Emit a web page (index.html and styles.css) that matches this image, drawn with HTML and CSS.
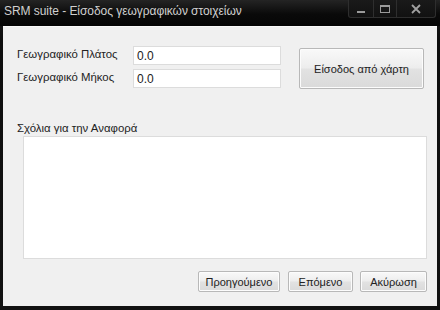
FILE: index.html
```html
<!DOCTYPE html>
<html lang="el">
<head>
<meta charset="utf-8">
<title>SRM suite</title>
<link rel="stylesheet" href="styles.css">
</head>
<body>
<div class="window">
  <div class="titlebar">
    <span class="title">SRM suite - Είσοδος γεωγραφικών στοιχείων</span>
    <div class="caption">
      <div class="cbtn cmin"><svg width="12" height="10" viewBox="0 0 12 10"><rect x="2" y="7" width="8" height="2" fill="#9a9a9a"/></svg></div>
      <div class="cbtn cmax"><svg width="12" height="10" viewBox="0 0 12 10"><rect x="1.5" y="1.5" width="9" height="7" fill="none" stroke="#9a9a9a" stroke-width="1"/><rect x="1.5" y="1.5" width="9" height="1.5" fill="#9a9a9a"/></svg></div>
      <div class="cbtn cclose"><svg width="12" height="10" viewBox="0 0 12 10"><path d="M2 1 L10 9 M10 1 L2 9" stroke="#a0a0a0" stroke-width="1.8"/></svg></div>
    </div>
  </div>
  <div class="client">
    <div class="coords">
      <label class="lbl">Γεωγραφικό Πλάτος</label>
      <div class="input">0.0</div>
      <button class="btn mapbtn">Είσοδος από χάρτη</button>
      <label class="lbl">Γεωγραφικό Μήκος</label>
      <div class="input">0.0</div>
    </div>
    <div class="comments-label">Σχόλια για την Αναφορά</div>
    <div class="textarea"></div>
    <div class="actions">
      <button class="btn prev">Προηγούμενο</button>
      <button class="btn next">Επόμενο</button>
      <button class="btn cancel">Ακύρωση</button>
    </div>
  </div>
</div>
</body>
</html>
```
FILE: styles.css
```css
* { box-sizing: border-box; }
html, body { margin: 0; padding: 0; background: #0c0c0c; }
.window {
  width: 440px;
  height: 310px;
  background: linear-gradient(#1d1d1d, #0e0e0e 40px, #121212);
  display: flex;
  flex-direction: column;
  font-family: "Liberation Sans", Arial, sans-serif;
}
.titlebar {
  height: 26px;
  display: flex;
  align-items: flex-start;
  justify-content: space-between;
  padding-left: 4px;
  background: linear-gradient(#242424, #0a0a0a 14px, #050505);
}
.title {
  color: #d0d0d0;
  font-size: 12px;
  line-height: 22px;
  letter-spacing: -0.05px;
}
.caption {
  display: flex;
  margin-right: 4px;
  height: 18px;
}
.cbtn {
  height: 18px;
  display: flex;
  align-items: center;
  justify-content: center;
  border: 1px solid #2e2e2e;
  border-top: none;
  background: linear-gradient(#1a1a1a, #111);
}
.cmin { width: 26px; border-radius: 0 0 0 3px; }
.cmax { width: 23px; border-left: none; }
.cclose { width: 39px; border-left: none; border-radius: 0 0 3px 0; }
.client {
  flex: 1;
  margin: 0 3px 4px 3px;
  background: #f0f0f0;
  border-top: 1px solid #fafafa;
  display: flex;
  flex-direction: column;
  padding: 19px 10px 0 14px;
  font-size: 11.4px;
  color: #222;
}
.coords {
  display: grid;
  grid-template-columns: 116px 148px 143px;
  grid-template-rows: 19px 19px;
  row-gap: 4px;
  align-items: center;
}
.lbl { line-height: 14px; padding-bottom: 3px; }
.input {
  height: 19px;
  background: #fff;
  border: 1px solid #dcdcdc;
  padding: 2px 0 0 3px;
  font-size: 12px;
  line-height: 14px;
}
.btn {
  font-family: "Liberation Sans", Arial, sans-serif;
  font-size: 11px;
  color: #222;
  border: 1px solid #b8b8b8;
  border-radius: 2px;
  background: linear-gradient(#f9f9f9 0%, #ededed 48%, #e2e2e2 52%, #dadada 100%);
  box-shadow: inset 0 0 0 1px #fcfcfc;
  padding: 0;
  margin: 0;
}
.mapbtn {
  grid-column: 3;
  grid-row: 1 / span 2;
  margin-left: 18px;
  width: 125px;
  height: 41px;
  align-self: start;
  margin-top: 2px;
}
.comments-label {
  margin-top: 33px;
  line-height: 14px;
}
.textarea {
  margin: 1px 0 0 6px;
  width: 404px;
  height: 123px;
  background: #fff;
  border: 1px solid #dcdcdc;
}
.actions {
  display: flex;
  justify-content: flex-end;
  gap: 7px;
  margin-top: 12px;
  width: 410px;
}
.actions .btn { height: 21px; }
.prev { width: 82px; margin-right: 1px; }
.next { width: 65px; }
.cancel { width: 67px; }
```
